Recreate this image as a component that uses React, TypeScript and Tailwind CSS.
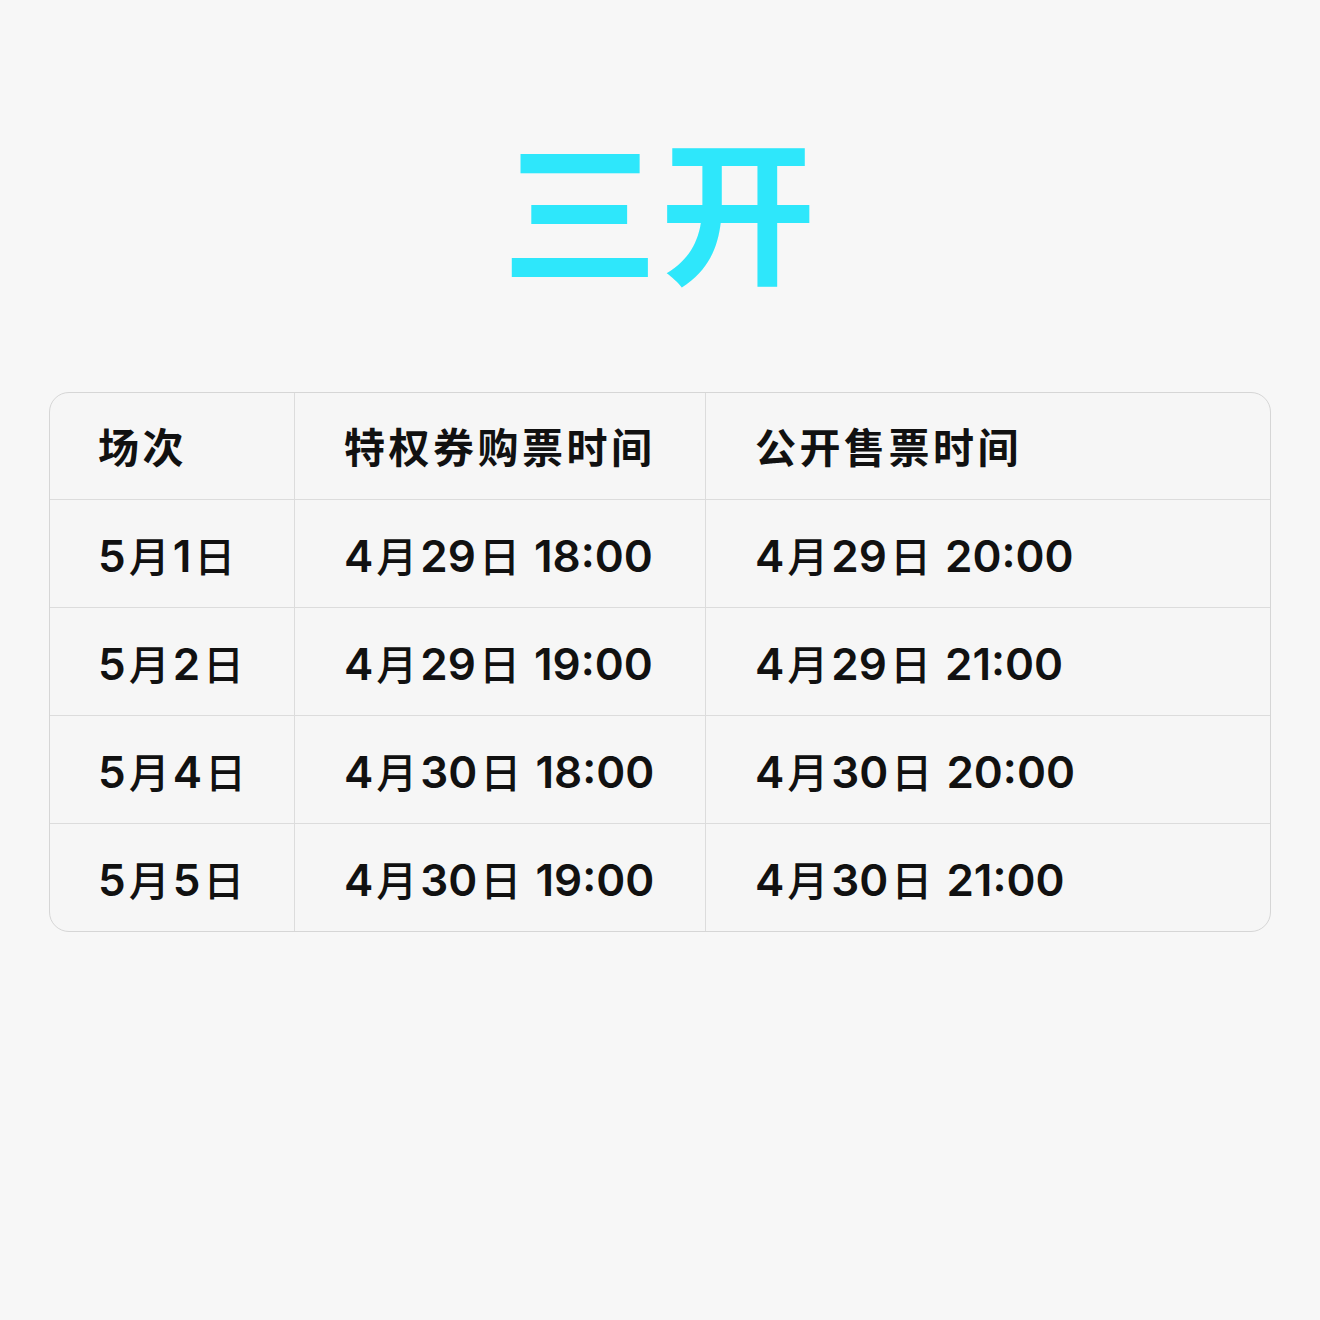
import React from "react";

const rows = [
  ["5月1日", "4月29日 18:00", "4月29日 20:00"],
  ["5月2日", "4月29日 19:00", "4月29日 21:00"],
  ["5月4日", "4月30日 18:00", "4月30日 20:00"],
  ["5月5日", "4月30日 19:00", "4月30日 21:00"],
];

function Mixed({ text }: { text: string }) {
  const parts = text.split(/([\u4e00-\u9fff]+)/).filter((p) => p.length > 0);
  return (
    <span className="leading-none">
      {parts.map((p, i) =>
        /[\u4e00-\u9fff]/.test(p) ? (
          <span
            key={i}
            className="text-[41px] font-medium mx-[3px]"
            style={{ fontFamily: '"Noto Sans CJK SC", sans-serif' }}
          >
            {p}
          </span>
        ) : (
          <span
            key={i}
            className="text-[44px] font-semibold whitespace-pre"
            style={{ fontFamily: 'Inter, "Noto Sans", sans-serif' }}
          >
            {p}
          </span>
        )
      )}
    </span>
  );
}

export default function App() {
  return (
    <div
      className="w-[1320px] h-[1320px] bg-[#f7f7f7] flex flex-col items-center"
      style={{ fontFamily: '"Noto Sans CJK SC", "Noto Sans", sans-serif' }}
    >
      <div className="pt-[126px] h-[294px] text-[156px] leading-none font-bold text-[#2ee7fb] tracking-[2px]">
        三开
      </div>
      <div className="mt-[98px] w-[1222px] border border-[#d6d6d6] rounded-[20px] overflow-hidden bg-[#f6f6f6]">
        <div className="grid grid-cols-[245px_411px_1fr] text-[#111] text-[41px]">
          <div className="h-[107px] pb-[1px] flex items-center pl-[48px] font-bold tracking-[3.5px] border-r border-b border-[#dcdcdc]">场次</div>
          <div className="h-[107px] pb-[1px] flex items-center pl-[49px] font-bold tracking-[3.5px] border-r border-b border-[#dcdcdc]">特权券购票时间</div>
          <div className="h-[107px] pb-[1px] flex items-center pl-[49px] font-bold tracking-[3.5px] border-b border-[#dcdcdc]">公开售票时间</div>
          {rows.map((r, i) => {
            const last = i === rows.length - 1;
            const h = last ? "h-[107px]" : "h-[108px] border-b";
            return (
              <React.Fragment key={i}>
                <div className={`${h} pt-[4px] flex items-center pl-[48px] border-r border-[#dcdcdc]`}><Mixed text={r[0]} /></div>
                <div className={`${h} pt-[4px] flex items-center pl-[49px] border-r border-[#dcdcdc]`}><Mixed text={r[1]} /></div>
                <div className={`${h} pt-[4px] flex items-center pl-[49px] border-[#dcdcdc]`}><Mixed text={r[2]} /></div>
              </React.Fragment>
            );
          })}
        </div>
      </div>
    </div>
  );
}
